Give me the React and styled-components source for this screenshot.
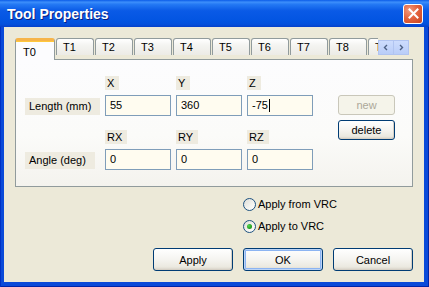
import React from "react";
import styled, { createGlobalStyle } from "styled-components";

const Global = createGlobalStyle`
  html, body { margin: 0; padding: 0; }
  body {
    font-family: "Liberation Sans", Arial, sans-serif;
    font-size: 11px;
    color: #000;
    background: #ece9d8;
  }
  * { box-sizing: border-box; }
`;

const Window = styled.div`
  width: 429px;
  height: 287px;
  display: flex;
  flex-direction: column;
  background: #0a4ad9;
  box-shadow: inset 1px 0 0 #0031c5, inset -1px 0 0 #0024a8, inset 0 -1px 0 #0024a8;
  overflow: hidden;
`;

const TitleBar = styled.div`
  height: 27px;
  flex: 0 0 27px;
  display: flex;
  align-items: center;
  justify-content: space-between;
  padding: 0 6px 0 7px;
  background: linear-gradient(
    to bottom,
    #0b5ce8 0%,
    #3d8ffb 8%,
    #2479f4 16%,
    #0a5ae6 40%,
    #0355e2 75%,
    #0450dc 90%,
    #0640c9 100%
  );
`;

const Title = styled.span`
  font-family: "Liberation Sans", Arial, sans-serif;
  font-weight: bold;
  font-size: 14px;
  color: #fff;
  text-shadow: 1px 1px 0 #0a1e80;
  letter-spacing: 0;
`;

const CloseButton = styled.div`
  width: 20px;
  height: 20px;
  border: 1px solid #fff;
  border-radius: 3px;
  background: radial-gradient(circle at 30% 30%, #f39a7e 0%, #e4643f 45%, #c8431f 100%);
  display: flex;
  align-items: center;
  justify-content: center;
`;

const Body = styled.div`
  flex: 1;
  margin: 0 5px 5px 4px;
  background: #ece9d8;
  padding: 11px 11px 0 11px;
  display: flex;
  flex-direction: column;
`;

const TabRow = styled.div`
  height: 21px;
  display: flex;
  align-items: flex-start;
  position: relative;
  z-index: 2;
`;

const TabStrip = styled.div`
  width: 363px;
  height: 22px;
  display: flex;
  align-items: flex-end;
  overflow: hidden;
`;

const Tab = styled.div`
  flex: 0 0 auto;
  width: ${(p) => (p.$active ? 40 : 38)}px;
  height: ${(p) => (p.$active ? 22 : 17)}px;
  margin-left: ${(p) => (p.$first ? 0 : 1)}px;
  margin-bottom: ${(p) => (p.$active ? 0 : 5)}px;
  padding: ${(p) => (p.$active ? "5px 0 0 7px" : "2px 0 0 6px")};
  border: 1px solid #919b9c;
  border-bottom: none;
  border-radius: 3px 3px 0 0;
  line-height: 13px;
  background: ${(p) =>
    p.$active
      ? "#fcfcfe"
      : "linear-gradient(to bottom, #ffffff 0%, #f4f4f1 40%, #ecebe6 100%)"};
  border-top: ${(p) => (p.$active ? "3px solid #f6b44a" : "1px solid #919b9c")};
  ${(p) => (p.$active ? "box-shadow: inset 0 1px 0 #ffc83c;" : "")}
`;

const Spin = styled.div`
  margin-top: 2px;
  display: flex;
  height: 15px;
`;

const SpinHalf = styled.div`
  width: 16px;
  height: 15px;
  background: linear-gradient(to bottom, #cddcfd, #b9cdf8);
  border: 1px solid #b1c4f0;
  margin-left: ${(p) => (p.$second ? "-1px" : "0")};
  display: flex;
  align-items: center;
  justify-content: center;
`;

const Panel = styled.div`
  height: 128px;
  margin-top: 0;
  border: 1px solid #919b9c;
  background: linear-gradient(to bottom, #fcfcfe 0%, #fbfbf9 60%, #f4f3ee 100%);
  padding: 16px 0 0 9px;
  display: flex;
  align-items: flex-start;
  position: relative;
  z-index: 1;
`;

const FieldGrid = styled.div`
  display: grid;
  grid-template-columns: 75px 66px 66px 66px;
  grid-template-rows: 14px 21px 14px 21px;
  column-gap: 5px;
  row-gap: 5px;
  & > :nth-child(n + 9) {
    margin-top: 9px;
  }
`;

const FieldGrid2 = styled(FieldGrid)`
  grid-template-rows: 14px 21px;
  margin-top: 14px;
`;

const Fields = styled.div`
  display: flex;
  flex-direction: column;
`;

const HeadLabel = styled.div`
  grid-column: ${(p) => p.$col};
  justify-self: start;
  height: 14px;
  line-height: 14px;
  padding: 0 5px 0 2px;
  background: #eeebe0;
`;

const RowLabel = styled.div`
  align-self: center;
  justify-self: start;
  height: 17px;
  line-height: 17px;
  padding: 0 9px 0 4px;
  margin-top: 2px;
  background: #eeebe0;
  white-space: nowrap;
`;

const Input = styled.div`
  height: 21px;
  border: 1px solid #7f9db9;
  background: #fffcf0;
  padding-left: 4px;
  line-height: 19px;
  display: flex;
  align-items: center;
`;

const Caret = styled.span`
  display: inline-block;
  width: 1px;
  height: 13px;
  background: #000;
  margin-left: 1px;
`;

const SideButtons = styled.div`
  margin-left: 25px;
  margin-top: 19px;
  display: flex;
  flex-direction: column;
  gap: 5px;
`;

const Button = styled.div`
  width: ${(p) => p.$w || 80}px;
  height: ${(p) => p.$h || 23}px;
  display: flex;
  align-items: center;
  justify-content: center;
  border: 1px solid ${(p) => (p.$disabled ? "#c9c7ba" : "#003c74")};
  border-radius: 3px;
  color: ${(p) => (p.$disabled ? "#aca899" : "#000")};
  background: ${(p) =>
    p.$disabled
      ? "#f5f4ea"
      : "linear-gradient(to bottom, #ffffff 0%, #f5f4f0 50%, #ebe9e0 85%, #d6d0c5 100%)"};
  box-shadow: ${(p) =>
    p.$default
      ? "inset 0 0 0 1px #bcd4f6, inset 0 0 0 2px #8cb4f2"
      : p.$disabled
      ? "none"
      : "inset -1px -1px 0 #d6d0c5"};
`;

const RadioGroup = styled.div`
  margin-top: 11px;
  margin-left: 228px;
  display: flex;
  flex-direction: column;
  gap: 10px;
`;

const RadioRow = styled.div`
  display: flex;
  align-items: center;
  height: 12px;
  gap: 2px;
`;

const RadioCircle = styled.div`
  width: 13px;
  height: 13px;
  border-radius: 50%;
  border: 1px solid #1c5180;
  background: linear-gradient(135deg, #dcdcd7 0%, #f4f4f0 60%, #ffffff 100%);
  display: flex;
  align-items: center;
  justify-content: center;
`;

const RadioDot = styled.div`
  width: 5px;
  height: 5px;
  border-radius: 50%;
  background: radial-gradient(circle at 35% 35%, #55d451, #21a121 60%, #1a7e1a);
`;

const ButtonRow = styled.div`
  margin-top: 16px;
  display: flex;
  justify-content: flex-end;
  gap: 10px;
`;

const tabs = ["T0", "T1", "T2", "T3", "T4", "T5", "T6", "T7", "T8", "T9"];

export default function App() {
  return (
    <>
      <Global />
      <Window>
        <TitleBar>
          <Title>Tool Properties</Title>
          <CloseButton>
            <svg width="11" height="11" viewBox="0 0 11 11">
              <path d="M1.5 1.5 L9.5 9.5 M9.5 1.5 L1.5 9.5" stroke="#fff" strokeWidth="2" strokeLinecap="square" />
            </svg>
          </CloseButton>
        </TitleBar>
        <Body>
          <TabRow>
            <TabStrip>
              {tabs.map((t, i) => (
                <Tab key={t} $active={i === 0} $first={i === 0}>
                  {t}
                </Tab>
              ))}
            </TabStrip>
            <Spin>
              <SpinHalf>
                <svg width="6" height="7" viewBox="0 0 6 7">
                  <path d="M4 1 L1.5 3.5 L4 6" stroke="#4d6185" strokeWidth="1.4" fill="none" />
                </svg>
              </SpinHalf>
              <SpinHalf $second>
                <svg width="6" height="7" viewBox="0 0 6 7">
                  <path d="M2 1 L4.5 3.5 L2 6" stroke="#4d6185" strokeWidth="1.4" fill="none" />
                </svg>
              </SpinHalf>
            </Spin>
          </TabRow>
          <Panel>
            <Fields>
              <FieldGrid2 style={{ marginTop: 0 }}>
                <span />
                <HeadLabel $col={2}>X</HeadLabel>
                <HeadLabel $col={3}>Y</HeadLabel>
                <HeadLabel $col={4}>Z</HeadLabel>
                <RowLabel>Length (mm)</RowLabel>
                <Input>55</Input>
                <Input>360</Input>
                <Input>
                  -75
                  <Caret />
                </Input>
              </FieldGrid2>
              <FieldGrid2>
                <span />
                <HeadLabel $col={2}>RX</HeadLabel>
                <HeadLabel $col={3}>RY</HeadLabel>
                <HeadLabel $col={4}>RZ</HeadLabel>
                <RowLabel>Angle (deg)</RowLabel>
                <Input>0</Input>
                <Input>0</Input>
                <Input>0</Input>
              </FieldGrid2>
            </Fields>
            <SideButtons>
              <Button $w={57} $h={20} $disabled>
                new
              </Button>
              <Button $w={57} $h={20}>
                delete
              </Button>
            </SideButtons>
          </Panel>
          <RadioGroup>
            <RadioRow>
              <RadioCircle />
              <span>Apply from VRC</span>
            </RadioRow>
            <RadioRow>
              <RadioCircle>
                <RadioDot />
              </RadioCircle>
              <span>Apply to VRC</span>
            </RadioRow>
          </RadioGroup>
          <ButtonRow>
            <Button>Apply</Button>
            <Button $default>OK</Button>
            <Button>Cancel</Button>
          </ButtonRow>
        </Body>
      </Window>
    </>
  );
}
